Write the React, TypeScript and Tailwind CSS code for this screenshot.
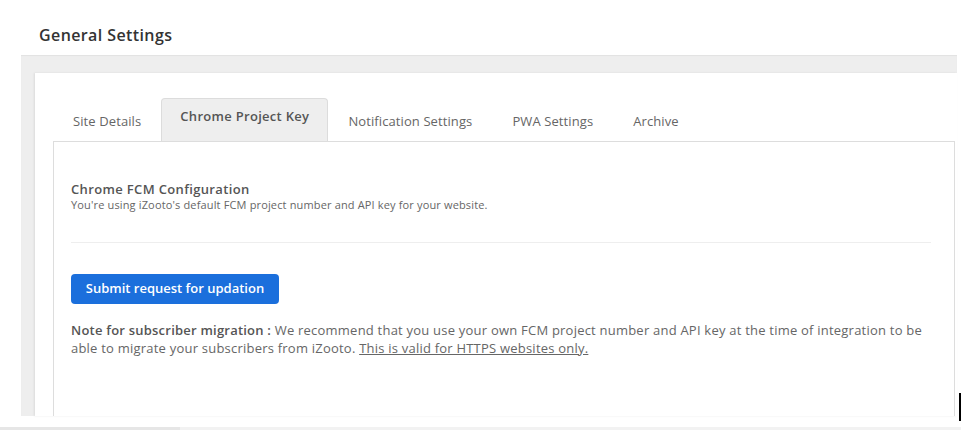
import React from "react";

const font = { fontFamily: '"Open Sans", "Noto Sans", sans-serif' };

export default function App() {
  const tabs = ["Site Details", "Chrome Project Key", "Notification Settings", "PWA Settings", "Archive"];
  return (
    <div className="relative w-[961px] h-[430px] bg-white overflow-hidden" style={font}>
      <div className="h-[55px] pl-[39px] pt-[25px]">
        <h1 className="text-[16px] leading-[21px] font-semibold text-[#333] tracking-[0.4px]">General Settings</h1>
      </div>
      <div className="ml-[21px] w-[936px] h-[361px] bg-[#eeeeee] pt-[18px] pl-[14px] shadow-[inset_0_1px_1px_rgba(0,0,0,0.05)]">
        <div className="h-full bg-white pt-[25px] pl-[18px] pr-[2px] shadow-[-1px_0_2px_rgba(0,0,0,0.08)]">
          <div className="flex items-end h-[43px]">
            {tabs.map((t, i) =>
              i === 1 ? (
                <div
                  key={t}
                  className="h-[43px] px-[18px] pt-[8px] bg-[#eeeeee] border border-b-0 border-[#dcdcdc] rounded-t-[4px] text-[13px] leading-[18px] font-semibold text-[#555] tracking-[0.3px]"
                >
                  {t}
                </div>
              ) : (
                <div key={t} className="h-[43px] px-[19px] pt-[13px] border border-transparent text-[13px] leading-[18px] text-[#666] tracking-[0.1px]">
                  {t}
                </div>
              )
            )}
          </div>
          <div className="h-[275px] border border-b-0 border-[#dddddd] pl-[17px] pr-[23px] pt-[38px]">
            <div className="text-[13px] leading-[18px] font-semibold text-[#555] tracking-[0.35px]">Chrome FCM Configuration</div>
            <div className="text-[11px] leading-[14px] text-[#666] tracking-[0.15px]">You're using iZooto's default FCM project number and API key for your website.</div>
            <div className="mt-[30px] border-t border-[#eeeeee]" />
            <button className="mt-[31px] h-[30px] w-[208px] rounded-[4px] bg-[#1b6fdc] text-white text-[13px] font-semibold">
              Submit request for updation
            </button>
            <p className="mt-[17px] text-[13px] leading-[18px] text-[#666] tracking-[0.22px]">
              <span className="font-semibold text-[#555]">Note for subscriber migration :</span> We recommend that you use your own FCM project number and API key at the time of integration to be able to migrate your subscribers from iZooto.{" "}
              <span className="underline">This is valid for HTTPS websites only.</span>
            </p>
          </div>
        </div>
      </div>
      <div className="mt-[11px] h-[3px] bg-[#f2f2f2]">
        <div className="w-[180px] h-full bg-[#e6e6e6]" />
      </div>
      <div className="absolute left-[959px] top-[393px] w-[2px] h-[28px] bg-black" />
    </div>
  );
}
